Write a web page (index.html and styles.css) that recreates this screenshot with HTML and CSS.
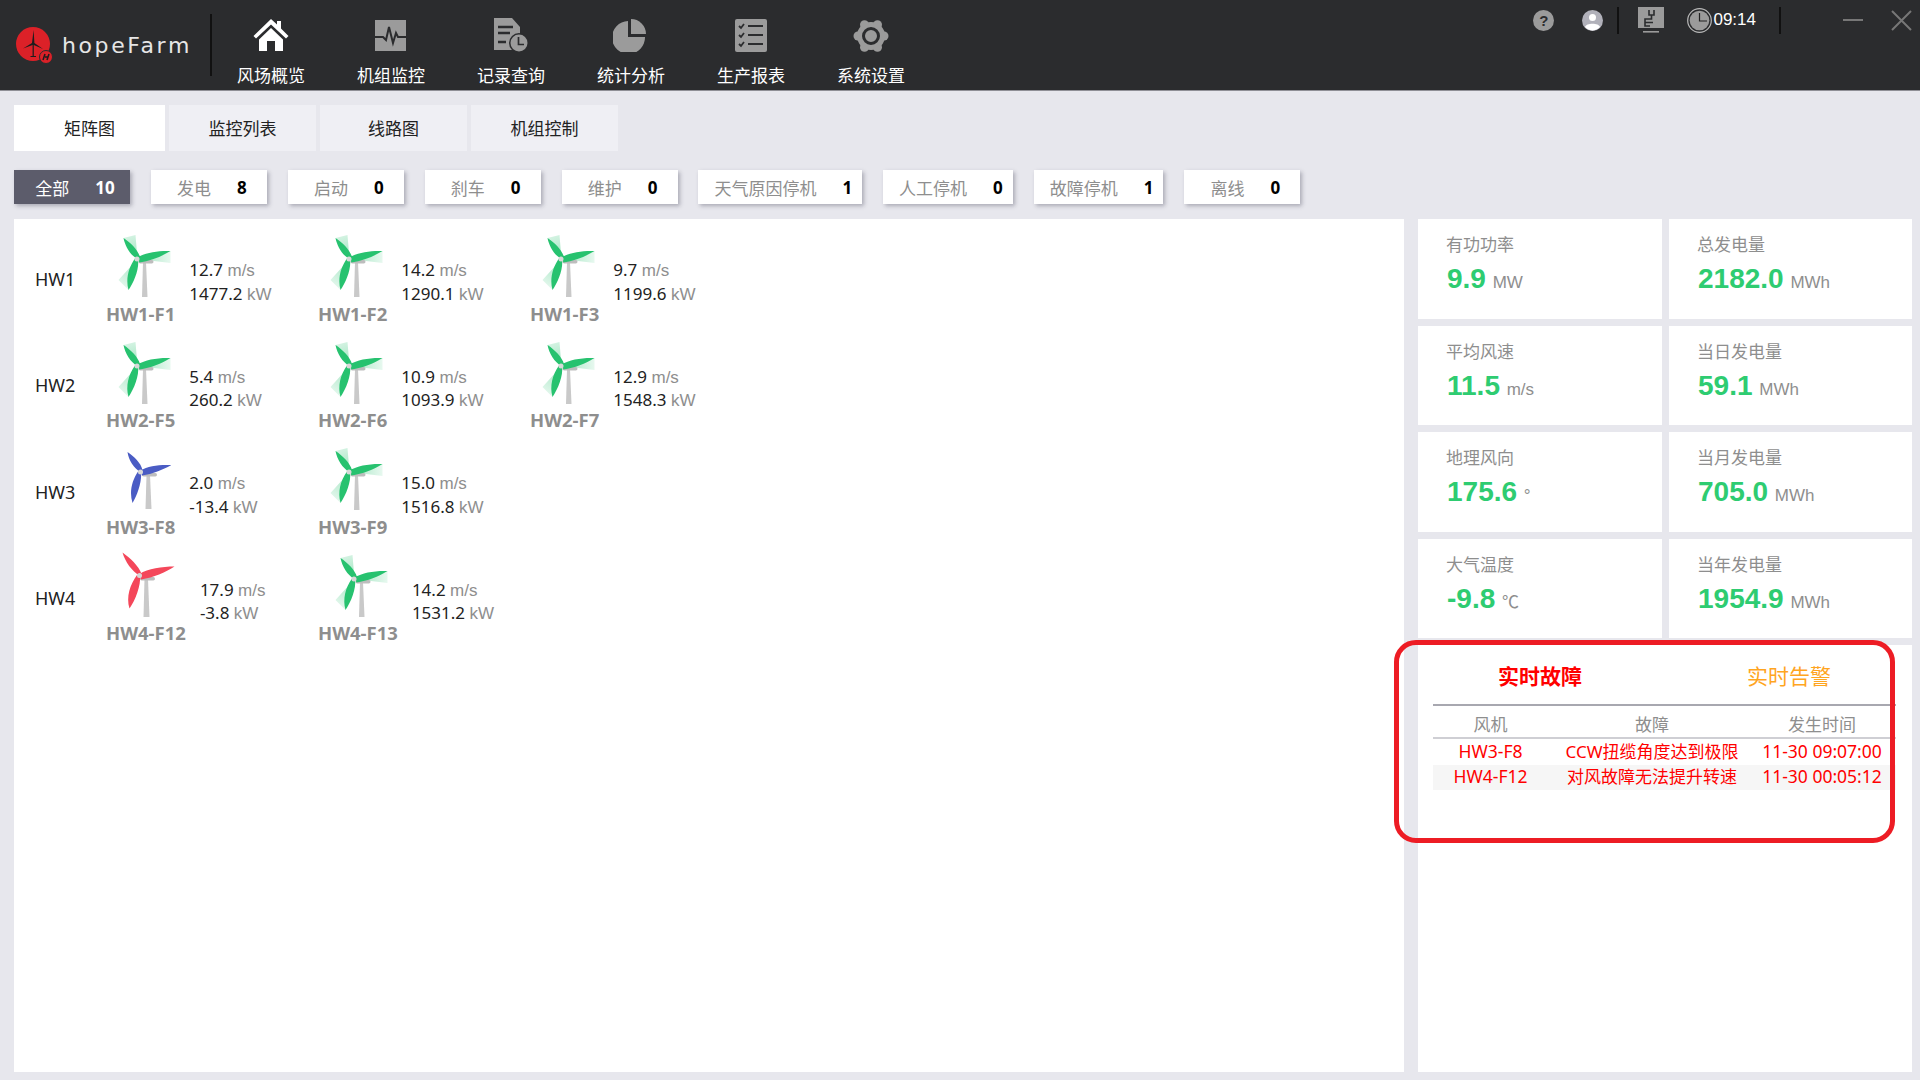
FILE: index.html
```html
<!DOCTYPE html>
<html lang="zh-CN">
<head>
    <meta charset="UTF-8">
    <meta name="viewport" content="width=device-width, initial-scale=1.0">
    <title>hopeFarm</title>
    <link rel="stylesheet" href="styles.css">
</head>
<body>

    <!-- shared turbine drawings -->
    <svg class="defs" width="0" height="0">
        <defs>
            <radialGradient id="halo" gradientUnits="userSpaceOnUse" cx="23" cy="27" r="38">
                <stop offset="0" stop-color="#27c26f" stop-opacity="0.45"/>
                <stop offset="1" stop-color="#27c26f" stop-opacity="0.06"/>
            </radialGradient>
            <symbol id="turbine-green" viewBox="-3.5 0 60 66">
                <path fill="url(#halo)" d="M23 27 L9 6 L21 3 Z M23 27 L56 19 L56 31 Z M23 27 L14 58 L4 48 Z"/>
                <path fill="#c9c9c9" d="M28.5 30 H31.5 L33 65 H27.5 Z"/>
                <rect x="24" y="28" width="15" height="3.5" rx="1.7" fill="#bdbdbd"/>
                <path fill="#27c26f" d="M23 27 C16 23.500 10.500 14 9 6 C16 10.500 23.500 18 25.500 25 Z M23 25.500 C31 20.500 44 18.500 56 19 C47 24.500 36 29 25 30.500 Z M23.500 27 C25 36.500 19.500 50 14 58 C11 47 14 35.500 20.500 26.500 Z"/>
                <circle cx="22.5" cy="27" r="2.5" fill="#d8d8d8"/>
            </symbol>
            <symbol id="turbine-blue" viewBox="0 0 60 66">
                <path fill="#c9c9c9" d="M35.5 30 H39 L40.5 64 H34.5 Z"/>
                <rect x="31" y="28" width="15" height="3.5" rx="1.7" fill="#bdbdbd"/>
                <path fill="#4a5cc4" d="M29.500 27 C23 23.500 17.500 15 16.500 7 C23 11.500 30 18 31.500 25 Z M29.500 25.500 C37 20.500 49 19.500 60.500 20 C52 24.500 42 29 31 30.500 Z M30 27 C31 36.500 26.500 50 21.500 58 C18 47 21 35.500 27 26.500 Z"/>
                <circle cx="29.5" cy="27" r="2.5" fill="#d8d8d8"/>
            </symbol>
            <symbol id="turbine-red" viewBox="0 0 60 66">
                <path fill="#c9c9c9" d="M28.5 27 H32 L33.5 65 H27.5 Z"/>
                <rect x="24" y="25" width="15" height="3.5" rx="1.7" fill="#bdbdbd"/>
                <path fill="#f4475a" d="M23.500 23.500 C16 19.500 9 9.500 6.500 0.500 C14 6 23 14 25.500 22 Z M23.500 22 C32 16.500 46 14.500 58.500 14.500 C49 20.500 38 25.500 25 27.500 Z M24 23.500 C25 33.500 19.500 48 13.500 56.500 C10 45 14 32.500 21 23 Z"/>
                <circle cx="23.5" cy="23.5" r="2.5" fill="#d8d8d8"/>
            </symbol>
        </defs>
    </svg>

    <header class="topbar">
        <div class="logo">
            <svg class="logo-mark" width="40" height="40" viewBox="0 0 40 40">
                <circle cx="18" cy="18" r="17" fill="#dc2128"/>
                <path fill="#1d1d1d" d="M17 17 L18.6 4 L19.4 17 L28 23 L18.8 19 L18.8 30 H21 V31 H15.5 V30 H17.6 V19 L8 22.5 Z"/>
                <circle cx="31" cy="31" r="6.5" fill="#dc2128" stroke="#2b2c2e" stroke-width="1"/>
                <path fill="none" stroke="#1d1d1d" stroke-width="1.5" d="M28 34 L30 28 M30 31 H32.5 M32 34 L34 28"/>
            </svg>
            <span class="logo-text">hopeFarm</span>
        </div>

        <nav class="nav">
            <a class="nav-item">
                <svg width="36" height="34" viewBox="0 0 36 34"><path fill="#fff" d="M18 1 L24 6.5 V3 H28 V10.5 L35.5 18 L33 20.5 L18 6.5 L3 20.5 L0.5 18 Z M6 21.5 L18 10 L30 21.5 V33 H22 V23 H14 V33 H6 Z"/></svg>
                <span>风场概览</span>
            </a>
            <a class="nav-item">
                <svg width="36" height="34" viewBox="0 0 36 34"><rect x="2" y="2" width="31" height="31" fill="#9b9b9b"/><path fill="none" stroke="#2b2c2e" stroke-width="2" d="M2 19 H10 L13 22 L16 9 L20 25 L23 15 L25 19 H33"/></svg>
                <span>机组监控</span>
            </a>
            <a class="nav-item">
                <svg width="36" height="34" viewBox="0 0 36 34"><path fill="#9b9b9b" d="M1 0 H19 L27 9 V24 H20 V32 H1 Z"/><path fill="none" stroke="#2b2c2e" stroke-width="2.500" d="M5 9 H20 M5 15 H17 M5 24 H13"/><circle cx="26" cy="25" r="10" fill="#2b2c2e"/><circle cx="26" cy="25" r="8.500" fill="#9b9b9b"/><path fill="none" stroke="#2b2c2e" stroke-width="1.700" d="M25.500 19 V26.500 H31"/></svg>
                <span>记录查询</span>
            </a>
            <a class="nav-item">
                <svg width="36" height="34" viewBox="0 0 36 34"><path fill="#9b9b9b" d="M15 3 V19 H32 A16.500 16.500 0 1 1 15 3 Z"/><path fill="#9b9b9b" d="M18 1 A15 15 0 0 1 33 16 H18 Z"/></svg>
                <span>统计分析</span>
            </a>
            <a class="nav-item">
                <svg width="36" height="34" viewBox="0 0 36 34"><rect x="2" y="1" width="32" height="33" rx="2" fill="#9b9b9b"/><path fill="none" stroke="#2b2c2e" stroke-width="1.8" d="M6 8 L8 10 L11 6 M15 8 H30 M6 17 L8 19 L11 15 M15 17 H30 M6 26 L8 28 L11 24 M15 26 H30"/></svg>
                <span>生产报表</span>
            </a>
            <a class="nav-item">
                <svg width="36" height="36" viewBox="0 0 36 36">
                    <g fill="#9b9b9b">
                        <circle cx="18" cy="18" r="14"/>
                        <circle cx="31" cy="18" r="4.500"/>
                        <circle cx="24.500" cy="6.800" r="4.500"/>
                        <circle cx="11.500" cy="6.800" r="4.500"/>
                        <circle cx="5" cy="18" r="4.500"/>
                        <circle cx="11.500" cy="29.200" r="4.500"/>
                        <circle cx="24.500" cy="29.200" r="4.500"/>
                    </g>
                    <circle cx="18" cy="18" r="7.500" fill="none" stroke="#2b2c2e" stroke-width="3"/>
                </svg>
                <span class="gear-label">系统设置</span>
            </a>
        </nav>

        <div class="status">
            <span class="help">?</span>
            <svg class="user" width="21" height="21" viewBox="0 0 21 21">
                <circle cx="10.500" cy="10.500" r="10.500" fill="#b1b1ba"/>
                <circle cx="10.500" cy="7.500" r="3.500" fill="#fff"/>
                <path fill="#fff" d="M3 17 C4 12.500 17 12.500 18 17 C14 21.500 7 21.500 3 17 Z"/>
            </svg>
            <i class="status-line line-one"></i>
            <svg class="plc" width="26" height="26" viewBox="0 0 26 26">
                <rect x="0" y="0" width="26" height="21" fill="#9b9b9b"/>
                <path fill="none" stroke="#2b2c2e" stroke-width="1.600" d="M11 3 V8 H16 V3 M13.500 8 V12 H7 V19 H12 M7 15.500 H15"/>
                <rect x="5" y="24" width="16" height="1.600" fill="#9b9b9b"/>
            </svg>
            <svg class="clock" width="25" height="25" viewBox="0 0 25 25">
                <circle cx="12.500" cy="12.500" r="11.800" fill="none" stroke="#b9b9b9" stroke-width="1.200"/>
                <circle cx="12.500" cy="12.500" r="9.800" fill="#9b9b9b"/>
                <path fill="none" stroke="#222" stroke-width="1.200" d="M12.500 5 V13 H20"/>
            </svg>
            <span class="time">09:14</span>
            <i class="status-line line-two"></i>
            <svg class="win-min" width="20" height="4" viewBox="0 0 20 4"><rect y="1" width="20" height="2" fill="#777"/></svg>
            <svg class="win-close" width="21" height="21" viewBox="0 0 21 21"><path stroke="#777" stroke-width="2" d="M1 1 L20 20 M20 1 L1 20"/></svg>
        </div>
    </header>

    <main class="page">
        <div class="tabs">
            <a class="tab active">矩阵图</a>
            <a class="tab">监控列表</a>
            <a class="tab">线路图</a>
            <a class="tab">机组控制</a>
        </div>

        <div class="filters">
            <a class="chip active"><span>全部</span><b>10</b></a>
            <a class="chip"><span>发电</span><b>8</b></a>
            <a class="chip"><span>启动</span><b>0</b></a>
            <a class="chip"><span>刹车</span><b>0</b></a>
            <a class="chip"><span>维护</span><b>0</b></a>
            <a class="chip"><span>天气原因停机</span><b>1</b></a>
            <a class="chip"><span>人工停机</span><b>0</b></a>
            <a class="chip"><span>故障停机</span><b>1</b></a>
            <a class="chip"><span>离线</span><b>0</b></a>
        </div>

        <div class="content">
            <section class="matrix">
                <div class="line">
                    <div class="line-name">HW1</div>
                    <div class="unit">
                        <div class="unit-pic"><svg width="60" height="66"><use href="#turbine-green"/></svg><span>HW1-F1</span></div>
                        <div class="unit-vals"><p>12.7 <em>m/s</em></p><p>1477.2 <em>kW</em></p></div>
                    </div>
                    <div class="unit">
                        <div class="unit-pic"><svg width="60" height="66"><use href="#turbine-green"/></svg><span>HW1-F2</span></div>
                        <div class="unit-vals"><p>14.2 <em>m/s</em></p><p>1290.1 <em>kW</em></p></div>
                    </div>
                    <div class="unit">
                        <div class="unit-pic"><svg width="60" height="66"><use href="#turbine-green"/></svg><span>HW1-F3</span></div>
                        <div class="unit-vals"><p>9.7 <em>m/s</em></p><p>1199.6 <em>kW</em></p></div>
                    </div>
                </div>
                <div class="line">
                    <div class="line-name">HW2</div>
                    <div class="unit">
                        <div class="unit-pic"><svg width="60" height="66"><use href="#turbine-green"/></svg><span>HW2-F5</span></div>
                        <div class="unit-vals"><p>5.4 <em>m/s</em></p><p>260.2 <em>kW</em></p></div>
                    </div>
                    <div class="unit">
                        <div class="unit-pic"><svg width="60" height="66"><use href="#turbine-green"/></svg><span>HW2-F6</span></div>
                        <div class="unit-vals"><p>10.9 <em>m/s</em></p><p>1093.9 <em>kW</em></p></div>
                    </div>
                    <div class="unit">
                        <div class="unit-pic"><svg width="60" height="66"><use href="#turbine-green"/></svg><span>HW2-F7</span></div>
                        <div class="unit-vals"><p>12.9 <em>m/s</em></p><p>1548.3 <em>kW</em></p></div>
                    </div>
                </div>
                <div class="line">
                    <div class="line-name">HW3</div>
                    <div class="unit">
                        <div class="unit-pic"><svg width="60" height="66"><use href="#turbine-blue"/></svg><span>HW3-F8</span></div>
                        <div class="unit-vals"><p>2.0 <em>m/s</em></p><p>-13.4 <em>kW</em></p></div>
                    </div>
                    <div class="unit">
                        <div class="unit-pic"><svg width="60" height="66"><use href="#turbine-green"/></svg><span>HW3-F9</span></div>
                        <div class="unit-vals"><p>15.0 <em>m/s</em></p><p>1516.8 <em>kW</em></p></div>
                    </div>
                </div>
                <div class="line">
                    <div class="line-name">HW4</div>
                    <div class="unit">
                        <div class="unit-pic"><svg width="60" height="66"><use href="#turbine-red"/></svg><span>HW4-F12</span></div>
                        <div class="unit-vals"><p>17.9 <em>m/s</em></p><p>-3.8 <em>kW</em></p></div>
                    </div>
                    <div class="unit">
                        <div class="unit-pic"><svg width="60" height="66"><use href="#turbine-green"/></svg><span>HW4-F13</span></div>
                        <div class="unit-vals"><p>14.2 <em>m/s</em></p><p>1531.2 <em>kW</em></p></div>
                    </div>
                </div>
            </section>

            <aside class="side">
                <div class="stats">
                    <div class="stat"><label>有功功率</label><p><strong>9.9</strong> <em>MW</em></p></div>
                    <div class="stat"><label>总发电量</label><p><strong>2182.0</strong> <em>MWh</em></p></div>
                    <div class="stat"><label>平均风速</label><p><strong>11.5</strong> <em>m/s</em></p></div>
                    <div class="stat"><label>当日发电量</label><p><strong>59.1</strong> <em>MWh</em></p></div>
                    <div class="stat"><label>地理风向</label><p><strong>175.6</strong> <em>°</em></p></div>
                    <div class="stat"><label>当月发电量</label><p><strong>705.0</strong> <em>MWh</em></p></div>
                    <div class="stat"><label>大气温度</label><p><strong>-9.8</strong> <em>℃</em></p></div>
                    <div class="stat"><label>当年发电量</label><p><strong>1954.9</strong> <em>MWh</em></p></div>
                </div>

                <div class="alarms">
                    <div class="alarm-tabs">
                        <a class="alarm-tab fault">实时故障</a>
                        <a class="alarm-tab warn">实时告警</a>
                    </div>
                    <div class="alarm-table">
                        <div class="alarm-row head"><span>风机</span><span>故障</span><span>发生时间</span></div>
                        <div class="alarm-row"><span>HW3-F8</span><span>CCW扭缆角度达到极限</span><span>11-30 09:07:00</span></div>
                        <div class="alarm-row odd"><span>HW4-F12</span><span>对风故障无法提升转速</span><span>11-30 00:05:12</span></div>
                    </div>
                    <div class="callout"></div>
                </div>
            </aside>
        </div>
    </main>

</body>
</html>
```

FILE: styles.css
```css
/* General */
* {
    box-sizing: border-box;
}

body {
    margin: 0;
    width: 1920px;
    height: 1080px;
    overflow: hidden;
    background: #e7e7ed;
    font-family: "Noto Sans", "Noto Sans CJK SC", sans-serif;
    font-size: 17px;
    color: #222;
}

p {
    margin: 0;
}

em {
    font-style: normal;
}

.defs {
    position: absolute;
}

/* Top bar */
.topbar {
    height: 91px;
    display: flex;
    background: #2b2c2e;
    border-bottom: 1px solid #8f8f96;
}

.logo {
    width: 212px;
    height: 62px;
    margin-top: 14px;
    padding-left: 15px;
    display: flex;
    align-items: center;
    gap: 7px;
    border-right: 2px solid #111;
}

.logo-mark {
    margin-top: 2px;
    flex: none;
}

.logo-text {
    font-family: "DejaVu Sans", sans-serif;
    font-size: 22px;
    letter-spacing: 2.600px;
    color: #e6e6e6;
}

.nav {
    display: flex;
    margin-left: -1px;
}

.nav-item {
    width: 120px;
    display: flex;
    flex-direction: column;
    align-items: center;
    padding-top: 18px;
    color: #fff;
    line-height: 24px;
}

.nav-item span {
    margin-top: 12px;
}

.nav-item .gear-label {
    margin-top: 10px;
}

/* Status area */
.status {
    margin-left: auto;
    height: 40px;
    display: flex;
    align-items: center;
    padding-right: 8px;
}

.help {
    width: 21px;
    height: 21px;
    border-radius: 50%;
    background: #9b9b9b;
    color: #2b2c2e;
    font: bold 15px/21px "Liberation Sans", sans-serif;
    text-align: center;
}

.user {
    margin-left: 28px;
}

.status-line {
    width: 2px;
    height: 27px;
    background: #111;
}

.line-one {
    margin-left: 14px;
}

.plc {
    margin-left: 19px;
}

.clock {
    margin-left: 23px;
}

.time {
    margin-left: 1px;
    font: 17px "Liberation Sans", sans-serif;
    color: #fff;
}

.line-two {
    margin-left: 23px;
}

.win-min {
    margin-left: 62px;
}

.win-close {
    margin-left: 28px;
}

/* Tabs */
.page {
    padding: 14px 8px 0 14px;
}

.tabs {
    display: flex;
    gap: 4px;
}

.tab {
    width: 147px;
    height: 46px;
    background: #efeff4;
    color: #222;
    line-height: 48px;
    text-align: center;
}

.tab.active {
    width: 151px;
    background: #fff;
}

/* Filter chips */
.filters {
    display: flex;
    gap: 20.900px;
    margin-top: 19px;
}

.chip {
    min-width: 116px;
    height: 34px;
    padding: 0 10px 0 16px;
    display: flex;
    justify-content: center;
    align-items: center;
    gap: 26px;
    background: #fff;
    color: #8e8e8e;
    box-shadow: 2px 2px 4px rgba(60, 60, 80, 0.35);
}

.chip b {
    color: #000;
}

.chip.active {
    background: #5c5c6b;
    color: #fff;
}

.chip.active b {
    color: #fff;
}

/* Main content */
.content {
    display: flex;
    gap: 14px;
    margin-top: 15px;
    height: 853px;
}

.matrix {
    width: 1390px;
    background: #fff;
    padding: 13px 0 0 21px;
}

.line {
    height: 106.500px;
    display: flex;
}

.line-name {
    width: 71px;
    padding-top: 34.500px;
    font-size: 18px;
    line-height: 24px;
    color: #222;
}

.unit {
    width: 212px;
    display: flex;
    align-items: flex-start;
    gap: 14px;
}

.unit-pic {
    display: flex;
    flex-direction: column;
    align-items: center;
}

.unit-pic svg {
    display: block;
    overflow: visible;
}

.unit-pic span {
    margin-top: 3.500px;
    font: bold 18.500px/24px "Open Sans", sans-serif;
    color: #8e8e8e;
}

.unit-vals {
    padding-top: 27px;
    font-size: 17px;
    line-height: 22.500px;
    color: #222;
}

.unit-vals em {
    font-family: "Liberation Sans", sans-serif;
    color: #8e8e8e;
}

/* Stat cards */
.side {
    width: 494px;
    display: flex;
    flex-direction: column;
    gap: 7px;
}

.stats {
    display: grid;
    grid-template-columns: 244px 243px;
    grid-auto-rows: 99.500px;
    gap: 7px;
}

.stat {
    background: #fff;
    padding: 14px 0 0 28px;
}

.stat label {
    display: block;
    line-height: 24px;
    color: #8e8e8e;
}

.stat p {
    margin-top: 4px;
    line-height: 36px;
    color: #8e8e8e;
    font-family: "Liberation Sans", sans-serif;
    font-size: 17px;
}

.stat strong {
    margin: 0 2px 0 1px;
    font-size: 28px;
    color: #2ecc71;
}

/* Alarm panel */
.alarms {
    position: relative;
    flex: 1;
    background: #fff;
}

.alarm-tabs {
    height: 59px;
    display: flex;
    align-items: center;
}

.alarm-tab {
    font-size: 21px;
    text-align: center;
}

.fault {
    width: 244px;
    font-weight: bold;
    color: #ff0000;
}

.warn {
    width: 246px;
    margin-left: 4px;
    color: #ffa51f;
}

.alarm-table {
    margin: 0 16px 0 15px;
    border-top: 2px solid #a8a8b0;
}

.alarm-row {
    display: grid;
    grid-template-columns: 115px 208px 132px;
    height: 25.500px;
    font-size: 17.500px;
    line-height: 25px;
    text-align: center;
    color: #ff0000;
}

.alarm-row span:nth-child(2) {
    font-size: 17px;
}

.alarm-row.head {
    height: 33px;
    font-size: 17px;
    line-height: 38px;
    color: #8e8e8e;
    border-bottom: 2px solid #cfcfd4;
}

.alarm-row.odd {
    background: #f6f6f6;
    line-height: 23px;
}

/* Red hand-drawn mark lying over the panel */
.callout {
    position: absolute;
    left: -24px;
    top: -5px;
    width: 501px;
    height: 203px;
    border: 5px solid #ed1c24;
    border-radius: 22px;
    pointer-events: none;
}
```
